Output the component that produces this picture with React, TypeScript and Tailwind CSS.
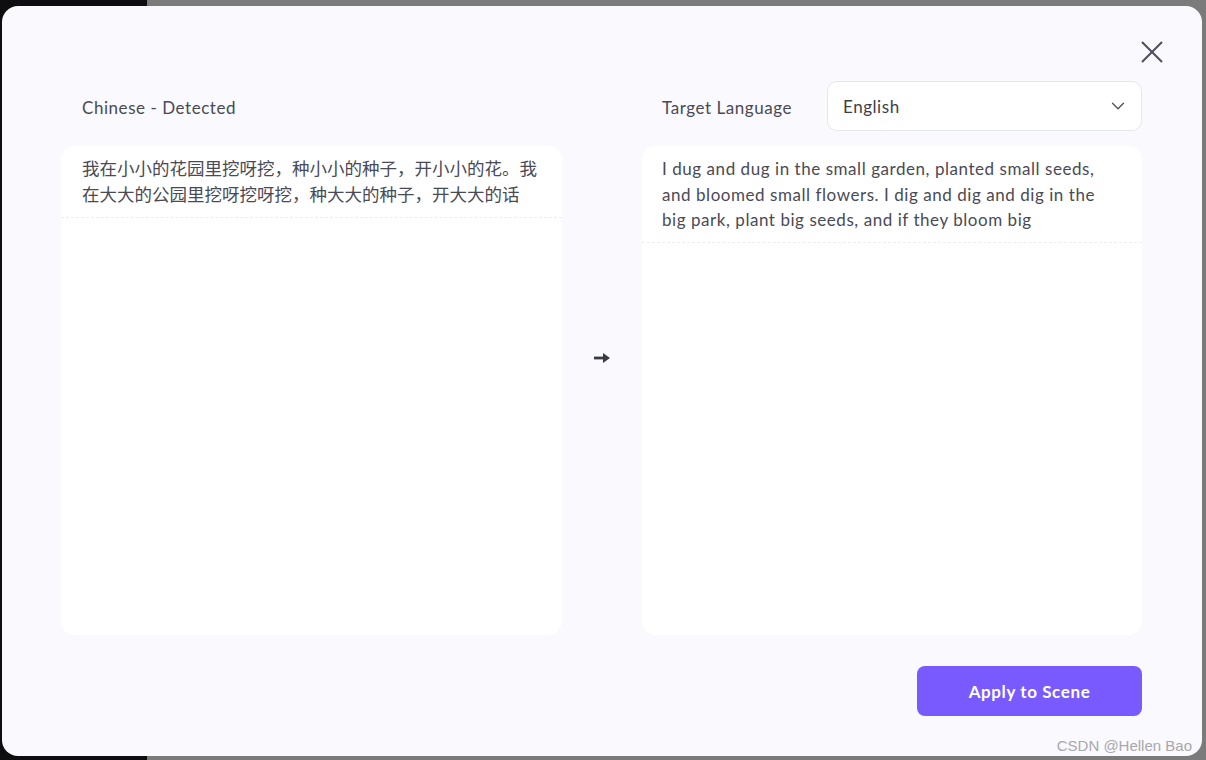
import { X, ChevronDown } from "lucide-react";

export default function App() {
  const font = { fontFamily: "Lato, 'Noto Sans CJK SC', sans-serif" };

  return (
    <div className="relative w-[1206px] h-[760px] overflow-hidden bg-[#7b7b7b]" style={font}>
      {/* page behind the dialog */}
      <div className="absolute left-0 top-0 w-[147px] h-full bg-[#0e0e10]" />

      {/* dialog */}
      <div className="absolute left-[2px] top-[6px] w-[1200px] h-[750px] rounded-[16px] bg-[#f9f9fe] pl-[59px] pr-[60px] pt-[75px]">
        <button className="absolute right-[31px] top-[27px] text-[#4b4f5c]">
          <X size={38} strokeWidth={1.2} />
        </button>

        <div className="grid grid-cols-[501px_80px_500px]">
          {/* headers */}
          <div className="flex items-center h-[50px] pl-[21px] pt-[3px] text-[17px] tracking-[0.55px] text-[#4a4a55]">
            Chinese - Detected
          </div>
          <div />
          <div className="flex items-center h-[50px] pl-[20px]">
            <span className="pt-[3px] text-[17px] tracking-[0.55px] text-[#4a4a55] w-[165px]">Target Language</span>
            <div className="flex-1 h-[50px] flex items-center justify-between rounded-[10px] border border-[#e6e6ee] bg-white pl-[15px] pr-[12px]">
              <span className="pt-[2px] text-[17px] tracking-[0.55px] text-[#3e3e48]">English</span>
              <ChevronDown size={22} strokeWidth={1.4} className="text-[#4b4f5c]" />
            </div>
          </div>

          {/* panels */}
          <div className="mt-[15px] h-[489px] rounded-[14px] bg-white">
            <div className="px-[21px] pt-[10px] pb-[9px] text-[17.5px] leading-[26px] text-[#4a4a55] border-b border-dashed border-[#ececf2]">
              我在小小的花园里挖呀挖，种小小的种子，开小小的花。我在大大的公园里挖呀挖呀挖，种大大的种子，开大大的话
            </div>
          </div>
          <div className="mt-[15px] flex justify-center pt-[205px]">
            <svg width="18" height="14" viewBox="0 0 18 14">
              <path d="M1 7h11" stroke="#3a3a44" strokeWidth="2.8" />
              <path d="M10 2L17 7L10 12Z" fill="#3a3a44" />
            </svg>
          </div>
          <div className="mt-[15px] h-[489px] rounded-[14px] bg-white">
            <div className="px-[20px] pt-[10px] pb-[9px] text-[17px] tracking-[0.55px] leading-[25.5px] text-[#4a4a55] border-b border-dashed border-[#ececf2]">
              I dug and dug in the small garden, planted small seeds, and bloomed small flowers. I dig and dig and dig in the big park, plant big seeds, and if they bloom big
            </div>
          </div>
        </div>

        <div className="flex justify-end mt-[31px]">
          <button className="w-[225px] h-[50px] rounded-[8px] bg-[#785aff] pt-[1px] text-white text-[17px] tracking-[0.6px] font-bold">
            Apply to Scene
          </button>
        </div>
      </div>

      <div
        className="absolute right-[14px] top-[735px] text-[15px] text-[#a8a8ad]"
        style={{ fontFamily: "'Liberation Sans', Arial, sans-serif" }}
      >
        CSDN @Hellen Bao
      </div>
    </div>
  );
}
